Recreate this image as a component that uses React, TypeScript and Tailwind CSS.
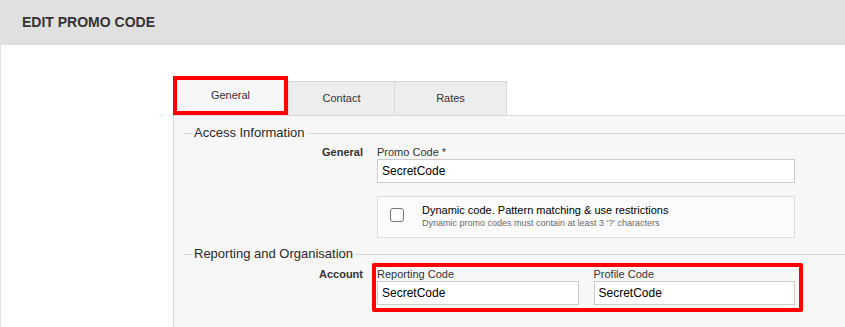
import React from "react";

const font = { fontFamily: '"Liberation Sans", Arial, sans-serif' };

function Legend({ title }: { title: string }) {
  return (
    <div className="flex items-center h-[16px] ml-[10px]">
      <div className="w-[8px] h-px bg-[#d9d9d9]" />
      <span className="px-[2px] text-[13px] leading-[16px] text-[#2a2a2a] whitespace-nowrap">{title}</span>
      <div className="flex-1 h-px bg-[#d9d9d9]" />
    </div>
  );
}

function TextInput({ value }: { value: string }) {
  return (
    <div className="h-[24px] border border-[#cccccc] bg-white flex items-center pl-[4px] text-[12px] text-black">
      {value}
    </div>
  );
}

export default function App() {
  return (
    <div className="w-[845px] h-[327px] bg-white overflow-hidden flex flex-col" style={font}>
      <div className="h-[45px] shrink-0 bg-[#e0e0e0] flex items-center pl-[22px]">
        <span className="text-[14px] font-bold text-[#333]">EDIT PROMO CODE</span>
      </div>
      <div className="flex-1 border-l border-[#e3e3e3] pl-[172px] pt-[31px] flex flex-col">
        {/* tabs */}
        <div className="flex items-end h-[39px]">
          <div className="w-[115px] h-[39px] border-4 border-[#ff0000] bg-[#f7f7f7] flex items-center justify-center text-[11px] text-[#333]">
            General
          </div>
          <div className="w-[107px] h-[34px] border border-b-0 border-[#d9d9d9] bg-[#ededed] flex items-center justify-center text-[11px] text-[#333]">
            Contact
          </div>
          <div className="w-[112px] h-[34px] border border-b-0 border-l-0 border-[#d9d9d9] bg-[#ededed] flex items-center justify-center text-[11px] text-[#333]">
            Rates
          </div>
        </div>
        {/* panel */}
        <div className="flex-1 border-l border-t border-[#d9d9d9] bg-[#f7f7f7] pt-[9px]">
          <Legend title="Access Information" />
          <div className="flex mt-[5px]">
            <div className="w-[189px] text-right text-[11px] font-bold leading-[13px] text-[#333]">General</div>
            <div className="ml-[14px] w-[418px]">
              <div className="text-[11px] leading-[13px] text-[#333]">Promo Code *</div>
              <TextInput value="SecretCode" />
              <div className="mt-[13px] h-[42px] border border-[#dddddd] bg-[#fbfbfb] flex items-start pt-[7px] pl-[12px]">
                <div className="mt-[4px] w-[14px] h-[14px] border border-[#767676] rounded-[3px] bg-white shrink-0" />
                <div className="ml-[18px] flex flex-col">
                  <span className="text-[11px] leading-[13px] text-black">
                    Dynamic code. Pattern matching &amp; use restrictions
                  </span>
                  <span className="text-[9px] leading-[12px] text-[#6a6a6a]">
                    Dynamic promo codes must contain at least 3 '?' characters
                  </span>
                </div>
              </div>
            </div>
          </div>
          <div className="mt-[8px]">
            <Legend title="Reporting and Organisation" />
          </div>
          <div className="flex mt-[6px]">
            <div className="w-[189px] text-right text-[11px] font-bold leading-[13px] text-[#333]">Account</div>
            <div className="ml-[14px] w-[418px] relative">
              <div className="grid grid-cols-2 gap-[15px]">
                <div>
                  <div className="text-[11px] leading-[13px] text-[#333]">Reporting Code</div>
                  <TextInput value="SecretCode" />
                </div>
                <div>
                  <div className="text-[11px] leading-[13px] text-[#333]">Profile Code</div>
                  <TextInput value="SecretCode" />
                </div>
              </div>
              <div className="absolute -left-[5px] -top-[5px] -right-[8px] -bottom-[7px] border-4 border-[#ff0000] rounded-[2px] pointer-events-none" />
            </div>
          </div>
        </div>
      </div>
    </div>
  );
}
